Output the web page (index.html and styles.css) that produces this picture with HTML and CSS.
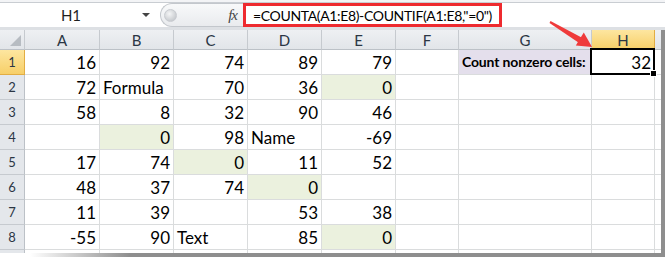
FILE: index.html
```html
<!DOCTYPE html>
<html lang="en">
<head>
<meta charset="UTF-8" />
<title>Count nonzero cells</title>
<link rel="stylesheet" href="styles.css">
</head>
<body>
<div class="window">
  <div class="ribbon-edge"></div>

  <div class="formula-bar">
    <div class="name-box">
      <span class="cell-ref">H1</span>
      <span class="caret"></span>
    </div>
    <div class="fx-zone">
      <span class="knob"></span>
      <span class="fx">fx</span>
    </div>
    <div class="formula">
      <span class="formula-text">=COUNTA(A1:E8)-COUNTIF(A1:E8,"=0")</span>
    </div>
  </div>

  <div class="band"></div>

  <div class="sheet">
    <div class="ch corner"></div>
    <div class="ch">A</div>
    <div class="ch">B</div>
    <div class="ch">C</div>
    <div class="ch">D</div>
    <div class="ch">E</div>
    <div class="ch">F</div>
    <div class="ch">G</div>
    <div class="ch sel">H</div>
    <div class="ch rest"></div>

    <div class="rh sel">1</div>
    <div class="c n">16</div>
    <div class="c n">92</div>
    <div class="c n">74</div>
    <div class="c n">89</div>
    <div class="c n">79</div>
    <div class="c"></div>
    <div class="c label">Count nonzero cells:</div>
    <div class="c n active">32</div>
    <div class="c rest"></div>

    <div class="rh">2</div>
    <div class="c n">72</div>
    <div class="c">Formula</div>
    <div class="c n">70</div>
    <div class="c n">36</div>
    <div class="c n zero">0</div>
    <div class="c"></div>
    <div class="c"></div>
    <div class="c"></div>
    <div class="c rest"></div>

    <div class="rh">3</div>
    <div class="c n">58</div>
    <div class="c n">8</div>
    <div class="c n">32</div>
    <div class="c n">90</div>
    <div class="c n">46</div>
    <div class="c"></div>
    <div class="c"></div>
    <div class="c"></div>
    <div class="c rest"></div>

    <div class="rh">4</div>
    <div class="c"></div>
    <div class="c n zero">0</div>
    <div class="c n">98</div>
    <div class="c">Name</div>
    <div class="c n">-69</div>
    <div class="c"></div>
    <div class="c"></div>
    <div class="c"></div>
    <div class="c rest"></div>

    <div class="rh">5</div>
    <div class="c n">17</div>
    <div class="c n">74</div>
    <div class="c n zero">0</div>
    <div class="c n">11</div>
    <div class="c n">52</div>
    <div class="c"></div>
    <div class="c"></div>
    <div class="c"></div>
    <div class="c rest"></div>

    <div class="rh">6</div>
    <div class="c n">48</div>
    <div class="c n">37</div>
    <div class="c n">74</div>
    <div class="c n zero">0</div>
    <div class="c"></div>
    <div class="c"></div>
    <div class="c"></div>
    <div class="c"></div>
    <div class="c rest"></div>

    <div class="rh">7</div>
    <div class="c n">11</div>
    <div class="c n">39</div>
    <div class="c"></div>
    <div class="c n">53</div>
    <div class="c n">38</div>
    <div class="c"></div>
    <div class="c"></div>
    <div class="c"></div>
    <div class="c rest"></div>

    <div class="rh">8</div>
    <div class="c n">-55</div>
    <div class="c n">90</div>
    <div class="c">Text</div>
    <div class="c n">85</div>
    <div class="c n zero">0</div>
    <div class="c"></div>
    <div class="c"></div>
    <div class="c"></div>
    <div class="c rest"></div>

    <div class="rh cut"></div>
    <div class="c cut"></div>
    <div class="c cut"></div>
    <div class="c cut"></div>
    <div class="c cut"></div>
    <div class="c cut"></div>
    <div class="c cut"></div>
    <div class="c cut"></div>
    <div class="c cut"></div>
    <div class="c cut rest"></div>
  </div>

  <div class="bottom-edge"></div>

  <!-- red callout arrow pointing at H1 -->
  <svg class="arrow" width="665" height="257" viewBox="0 0 665 257">
    <polygon points="550.5,21.1 581.6,37.4 578.4,42.6 549.5,22.9" fill="#ef3b3b"/>
    <polygon points="592,47 575.8,45.6 583.8,32.4" fill="#ef3b3b"/>
  </svg>
</div>
</body>
</html>
```

FILE: styles.css
```css
body {
  margin: 0;
  background: #fff;
  font-family: Lato, "Open Sans", sans-serif;
  color: #000;
}

.window {
  position: relative;
  width: 665px;
  height: 257px;
  overflow: hidden;
}

.ribbon-edge {
  height: 2px;
  background: #f3f4f6;
  border-bottom: 1px solid #c9cdd2;
}

/* formula bar */
.formula-bar {
  display: flex;
  height: 24px;
  background: #fff;
}

.name-box {
  width: 160px;
  flex: none;
  display: flex;
  align-items: center;
  box-sizing: border-box;
  padding-right: 6px;
}

.cell-ref {
  width: 142px;
  text-align: center;
  font-size: 15px;
  color: #1f1f1f;
}

.caret {
  width: 0;
  height: 0;
  border-left: 4px solid transparent;
  border-right: 4px solid transparent;
  border-top: 4px solid #444;
}

.fx-zone {
  width: 83px;
  flex: none;
  box-sizing: border-box;
  display: flex;
  align-items: center;
  justify-content: space-between;
  padding: 0 6px 0 3px;
  background: linear-gradient(#f8f9fa, #e9ebee);
  border: 1px solid #c3c7cc;
  border-right: none;
  border-radius: 12px 0 0 12px;
}

.knob {
  width: 11px;
  height: 11px;
  border-radius: 50%;
  background: radial-gradient(circle at 40% 35%, #f4f5f6, #b9bdc2);
  border: 1px solid #c8cbd0;
}

.fx {
  font-family: "Liberation Serif", serif;
  font-style: italic;
  font-size: 15px;
  color: #444;
  letter-spacing: -1px;
}

.formula {
  flex: 1;
  display: flex;
  align-items: center;
}

.formula-text {
  width: 259px;
  height: 24px;
  box-sizing: border-box;
  border: 3px solid #ee2a2f;
  padding: 0 0 0 7px;
  display: flex;
  align-items: center;
  font-size: 14px;
  letter-spacing: -0.35px;
  white-space: nowrap;
}

.band {
  height: 3px;
  background: #dde0e4;
}

/* sheet grid */
.sheet {
  display: grid;
  grid-template-columns: 25px 75px 74px 74px 74px 74px 63px 133px 63px 6px;
  grid-template-rows: 20px repeat(8, 25px) 3px;
  border-right: 4px solid #8e8e8e;
}

.ch {
  box-sizing: border-box;
  background: linear-gradient(#eef0f3, #e2e5e9);
  border-right: 1px solid #c6cacf;
  border-bottom: 1px solid #bcc1c7;
  display: flex;
  align-items: center;
  justify-content: center;
  font-size: 15px;
  color: #2b3644;
}

.ch.rest {
  border-right: none;
}

.corner {
  position: relative;
}

.corner::after {
  content: "";
  position: absolute;
  right: 3px;
  bottom: 3px;
  border-left: 11px solid transparent;
  border-bottom: 11px solid #b7bcc2;
}

.rh {
  box-sizing: border-box;
  background: #e4e7eb;
  border-right: 1px solid #bcc1c7;
  border-bottom: 1px solid #c6cacf;
  display: flex;
  align-items: center;
  justify-content: center;
  font-size: 13px;
  color: #2b3644;
}

.sel {
  background: linear-gradient(#fde6a0, #f7cf68);
  border-bottom-color: #e2ad43;
  border-right-color: #e2ad43;
}

.c {
  box-sizing: border-box;
  border-right: 1px solid #dadcdd;
  border-bottom: 1px solid #dadcdd;
  display: flex;
  align-items: flex-end;
  padding: 0 3px 3px;
  font-size: 17px;
  line-height: 1;
  white-space: nowrap;
}

.c.n {
  justify-content: flex-end;
}

.c.rest {
  border-right: none;
}

.c.cut,
.rh.cut {
  border-bottom: none;
}

.zero {
  background: #ebf1de;
}

.label {
  background: #e4dfec;
  font-weight: bold;
  font-size: 14px;
  letter-spacing: -0.15px;
  padding-bottom: 5px;
}

.active {
  position: relative;
}

.active::after {
  content: "";
  position: absolute;
  left: -2px;
  top: -2px;
  right: -1px;
  bottom: -1px;
  border: 2px solid #000;
}

.active::before {
  content: "";
  position: absolute;
  right: -3px;
  bottom: -3px;
  width: 5px;
  height: 5px;
  background: #000;
  border: 1px solid #fff;
  z-index: 1;
}

.bottom-edge {
  height: 4px;
  background: linear-gradient(to right, #fff 30px, #8e8e8e 130px);
}

.arrow {
  position: absolute;
  left: 0;
  top: 0;
  pointer-events: none;
}
```
